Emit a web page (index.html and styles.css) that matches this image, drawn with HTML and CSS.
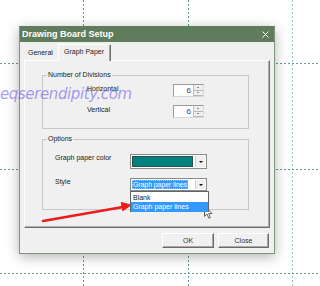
FILE: index.html
```html
<!DOCTYPE html>
<html>
<head>
<meta charset="utf-8">
<link rel="stylesheet" href="styles.css">
</head>
<body>
<svg class="grid" width="320" height="286" viewBox="0 0 320 286">
  <g stroke="#5f9a98" stroke-width="1" stroke-dasharray="2 2" fill="none">
    <line x1="83.5" y1="0" x2="83.5" y2="286"/>
    <line x1="188.5" y1="0" x2="188.5" y2="286"/>
    <line x1="292.5" y1="0" x2="292.5" y2="286" stroke="#9cc2c0"/>
    <line x1="0" y1="63.5" x2="320" y2="63.5"/>
    <line x1="0" y1="169.5" x2="320" y2="169.5"/>
    <line x1="0" y1="273.5" x2="320" y2="273.5"/>
  </g>
</svg>
<div class="desk">
  <div class="dialog">
    <div class="titlebar">
      <span class="title">Drawing Board Setup</span>
      <svg class="close" width="7" height="7" viewBox="0 0 7 7"><path d="M0.5 0.5L6.5 6.5M6.5 0.5L0.5 6.5" stroke="#fff" stroke-width="1"/></svg>
    </div>
    <div class="content">
      <div class="tabs">
        <div class="tab">General</div>
        <div class="tab active">Graph Paper</div>
      </div>
      <div class="page">
        <div class="group g1">
          <span class="legend">Number of Divisions</span>
          <div class="row">
            <span class="lbl">Horizontal</span>
            <div class="spin"><span class="val">6</span><span class="btns"><span class="up"></span><span class="dn"></span></span></div>
          </div>
          <div class="row r2">
            <span class="lbl">Vertical</span>
            <div class="spin"><span class="val">6</span><span class="btns"><span class="up"></span><span class="dn"></span></span></div>
          </div>
        </div>
        <div class="group g2">
          <span class="legend">Options</span>
          <div class="orow o1">
            <span class="olbl">Graph paper color</span>
            <div class="combo color"><span class="swatch"></span><span class="drop"><i></i></span></div>
          </div>
          <div class="orow o2">
            <span class="olbl">Style</span>
            <div class="combo style"><span class="sel">Graph paper lines</span><span class="drop"><i></i></span>
              <div class="list">
                <div class="item">Blank</div>
                <div class="item hi">Graph paper lines</div>
              </div>
            </div>
          </div>
        </div>
      </div>
      <div class="buttons">
        <div class="btn ok">OK</div>
        <div class="btn">Close</div>
      </div>
    </div>
  </div>
</div>
<div class="watermark">eqserendipity.com</div>
<svg class="arrow" width="320" height="286" viewBox="0 0 320 286">
  <line x1="43" y1="221" x2="123" y2="207" stroke="#ea1c1c" stroke-width="2.6" stroke-linecap="round"/>
  <polygon points="131,205 122.8,210.8 121.2,202.5" fill="#ea1c1c" stroke="#ea1c1c" stroke-width="1" stroke-linejoin="round"/>
</svg>
<svg class="cursor" width="10" height="15" viewBox="0 0 10 15">
  <path d="M0.5 0.5 L0.5 11.5 L3 9 L4.8 13.2 L6.4 12.5 L4.7 8.5 L8 8.5 Z" fill="#fff" stroke="#555" stroke-width="0.9" stroke-linejoin="round"/>
</svg>
</body>
</html>
```
FILE: styles.css
```css
* { box-sizing: border-box; }
html, body { margin: 0; }
body {
  width: 320px;
  height: 286px;
  overflow: hidden;
  position: relative;
  background: #fff;
  font-family: "Liberation Sans", Arial, sans-serif;
  font-size: 7px;
  line-height: 8px;
  color: #111;
}
.grid { position: absolute; left: 0; top: 0; }
.desk { position: relative; padding: 26px 0 0 19px; }
.dialog {
  width: 256px;
  height: 228px;
  border: 1px solid #7f937d;
  border-top-color: #5f7c5c;
  background: #f0f0f0;
  box-shadow: 0 3px 12px rgba(0, 0, 0, 0.3);
  display: flex;
  flex-direction: column;
}
.titlebar {
  height: 15px;
  background: #5f7c5c;
  display: flex;
  align-items: center;
  justify-content: space-between;
  padding: 0 5px 1px 2px;
}
.title { color: #fff; font-weight: bold; font-size: 9px; line-height: 10px; }
.close { display: block; margin-top: 1px; }
.content { padding: 2px 4px 0 4px; }
.tabs { display: flex; align-items: flex-end; height: 16px; padding-left: 1px; position: relative; z-index: 1; }
.tab { height: 14px; width: 33px; padding: 3px 0 0 3px; color: #222; }
.tab.active {
  height: 17px;
  width: 53px;
  margin-bottom: -1px;
  padding: 3px 0 0 5px;
  background: #f0f0f0;
  border-top: 1px solid #fff;
  border-left: 1px solid #fff;
  border-right: 1px solid #6e6e6e;
  box-shadow: inset -1px 0 #a8a8a8;
}
.page {
  height: 168px;
  border-top: 1px solid #fff;
  border-left: 1px solid #fff;
  border-right: 1px solid #6e6e6e;
  border-bottom: 1px solid #6e6e6e;
  box-shadow: inset -1px -1px #b0b0b0;
  padding: 14px 0 0 17px;
  position: relative;
}
.group {
  width: 207px;
  border: 1px solid #c8c8c8;
  position: relative;
}
.legend {
  position: absolute;
  top: -5px;
  left: 4px;
  padding: 0 1px;
  background: #f0f0f0;
  color: #222;
}
.g1 { height: 54px; padding: 8px 0 0 44px; }
.row { display: flex; align-items: center; height: 13px; }
.row.r2 { margin-top: 8px; }
.lbl { width: 86px; color: #222; position: relative; top: -2px; }
.spin {
  width: 31px;
  height: 13px;
  border: 1px solid #9a9a9a;
  border-right-color: #d8d8d8;
  border-bottom-color: #d8d8d8;
  background: #fff;
  display: flex;
  align-items: center;
  justify-content: flex-end;
}
.val { color: #3a3a7a; margin-right: 2px; font-size: 8px; }
.btns { width: 10px; height: 11px; display: flex; flex-direction: column; border-left: 1px solid #c0c0c0; }
.btns span { flex: 1; background: #efefef; border-bottom: 1px solid #b8b8b8; position: relative; }
.btns .up::after, .btns .dn::after {
  content: "";
  position: absolute;
  left: 3px;
  top: 2px;
  border-left: 1.5px solid transparent;
  border-right: 1.5px solid transparent;
}
.btns .up::after { border-bottom: 1.5px solid #222; }
.btns .dn::after { border-top: 1.5px solid #222; top: 1.5px; }
.g2 { height: 71px; margin-top: 10px; padding: 14px 0 0 12px; }
.orow { display: flex; align-items: flex-start; }
.o1 { height: 15px; }
.o2 { height: 13px; margin-top: 9px; }
.olbl { width: 75px; color: #222; }
.combo {
  width: 77px;
  border: 1px solid #8a8a8a;
  background: #fff;
  display: flex;
  align-items: stretch;
  position: relative;
  padding: 1px;
}
.combo.color { height: 15px; }
.combo.style { height: 13px; }
.swatch { flex: 1; background: #008180; border: 1px solid #2c4f4f; margin-right: 2px; }
.sel {
  background: #3399ff;
  color: #fff;
  outline: 1px dotted #9ac8ff;
  outline-offset: -1px;
  padding: 0 1px;
  line-height: 9px;
  white-space: nowrap;
  letter-spacing: -0.1px;
}
.drop { width: 10px; margin-left: auto; background: #efefef; border-left: 1px solid #d0d0d0; position: relative; flex: none; }
.drop i {
  position: absolute;
  left: 3px;
  top: 50%;
  margin-top: -1px;
  border-left: 2px solid transparent;
  border-right: 2px solid transparent;
  border-top: 2px solid #111;
}
.list {
  position: absolute;
  left: -1px;
  top: 12px;
  width: 79px;
  height: 21px;
  border: 1px solid #646464;
  background: #fff;
  padding-top: 1px;
  z-index: 3;
}
.item { height: 9px; line-height: 9px; padding-left: 2px; color: #222; }
.item.hi { background: #3399ff; color: #fff; height: 10px; }
.buttons { display: flex; justify-content: flex-end; gap: 4px; margin-top: 5px; padding-right: 1px; }
.btn {
  width: 51px;
  height: 15px;
  border: 1px solid;
  border-color: #fff #6a6a6a #6a6a6a #fff;
  box-shadow: inset -1px -1px #a8a8a8;
  background: #f0f0f0;
  text-align: center;
  line-height: 13px;
  color: #333;
}
.btn.ok { width: 52px; }
.watermark {
  position: absolute;
  left: 0;
  top: 86px;
  font-family: "DejaVu Sans", sans-serif;
  font-style: italic;
  font-size: 15px;
  line-height: 16px;
  color: rgba(110, 90, 230, 0.6);
  letter-spacing: -0.4px;
}
.arrow { position: absolute; left: 0; top: 0; }
.cursor { position: absolute; left: 204px; top: 205px; }
```
